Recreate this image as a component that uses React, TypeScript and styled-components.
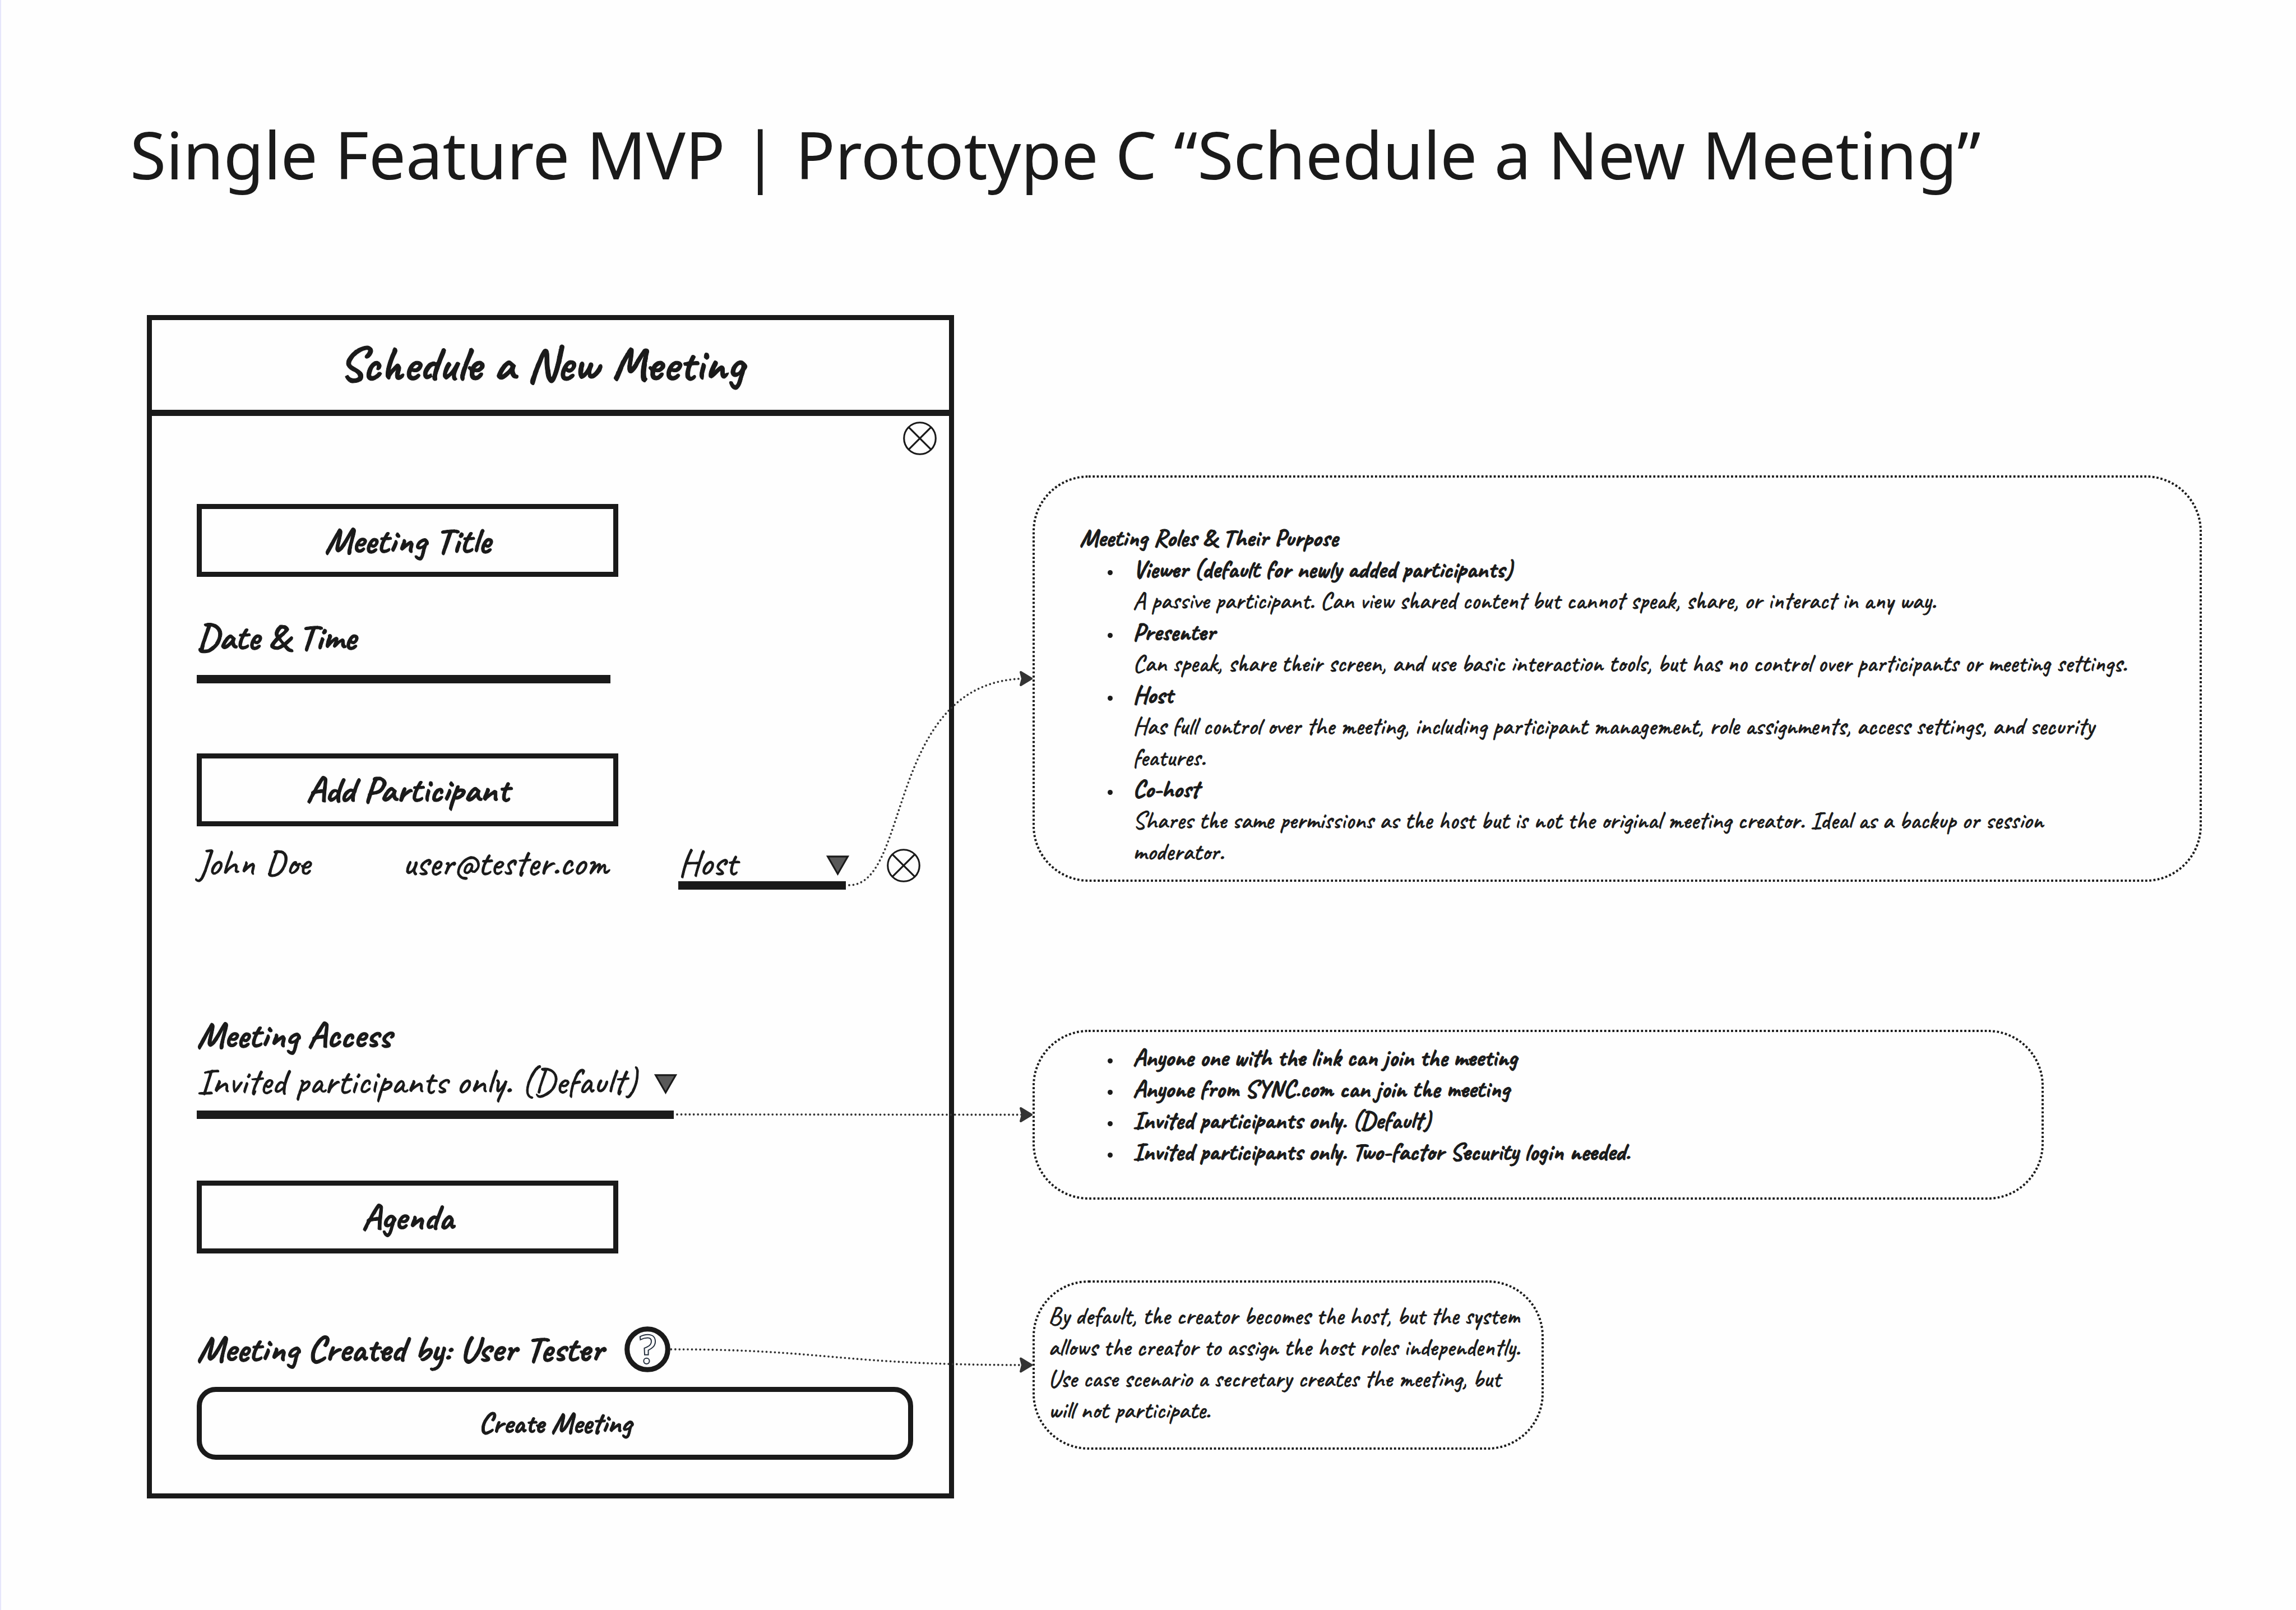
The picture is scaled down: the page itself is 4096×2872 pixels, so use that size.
import React, { RefObject, useLayoutEffect, useRef, useState } from "react";
import styled, { createGlobalStyle, css } from "styled-components";

const ink = "#1a1a1a";
const hand = '"Caveat", cursive';

const GlobalStyle = createGlobalStyle`
  *, *::before, *::after { box-sizing: border-box; }
  body { margin: 0; background: #fefefe; color: ${ink}; }
  h1, h2, p, ul { margin: 0; padding: 0; }
`;

const Page = styled.div`
  position: relative;
  min-height: 100vh;
  padding: 195px 168px 160px 230px;
  border-left: 2px solid #e6e6fb;
  font-family: ${hand};
`;

const PageTitle = styled.h1`
  font: 400 117px/160px "Noto Sans", sans-serif;
`;

const Board = styled.main`
  display: grid;
  grid-template-columns: minmax(0, 1440fr) minmax(0, 2086fr);
  gap: 140px;
  align-items: start;
  margin: 207px 0 0 30px;
  -webkit-text-stroke: 1px ${ink};
`;

/* Wireframe window */

const Window = styled.section`
  border: 9px solid ${ink};
`;

const WindowHeader = styled.header`
  padding: 0 32px 4px 0;
  border-bottom: 11px solid ${ink};
  text-align: center;
`;

const WindowTitle = styled.h2`
  font: 700 87px/156px ${hand};
`;

const WindowBar = styled.div`
  display: flex;
  justify-content: flex-end;
  padding: 10px 22px 0;
`;

const Form = styled.form`
  display: flex;
  flex-direction: column;
  align-items: flex-start;
  padding: 87px 64px 60px 80px;
`;

const bare = css`
  margin: 0;
  padding: 0;
  border: 0;
  border-radius: 0;
  background: transparent;
  color: ${ink};
  font-family: ${hand};
`;

const boxed = css`
  ${bare}
  width: 752px;
  height: 130px;
  border: 9px solid ${ink};
  font-size: 66px;
  font-weight: 700;
  line-height: 112px;
  text-align: center;
`;

const BoxInput = styled.input`
  ${boxed}
  &::placeholder { color: ${ink}; opacity: 1; }
`;

const BoxButton = styled.button`
  ${boxed}
`;

const SubmitButton = styled.button`
  ${boxed}
  width: 100%;
  margin-top: 26px;
  border-radius: 34px;
  font-size: 52px;
`;

const IconButton = styled.button`
  ${bare}
  display: flex;
  align-items: center;
  justify-content: center;
  svg { display: block; }
`;

const DateField = styled.div`
  display: flex;
  flex-direction: column;
  width: 738px;
  margin: 66px 0 125px;
`;

const FieldLabel = styled.label<{ $height: number }>`
  font-size: 66px;
  font-weight: 700;
  line-height: ${(p) => p.$height}px;
`;

const LineInput = styled.input`
  ${bare}
  height: 40px;
  border-bottom: 15px solid ${ink};
`;

const Participant = styled.div`
  display: flex;
  align-items: flex-start;
  margin-top: 34px;
  font-size: 66px;
  line-height: 64px;
`;

const Person = styled.div`
  display: flex;
  justify-content: space-between;
  width: 734px;
  margin-right: 125px;
`;

const RemoveButton = styled(IconButton)`
  height: 72px;
  margin-left: 73px;
`;

const SelectLine = styled.div<{ $width: number; $height: number }>`
  position: relative;
  width: ${(p) => p.$width}px;
  border-bottom: 15px solid ${ink};
  select {
    ${bare}
    display: block;
    appearance: none;
    width: 100%;
    height: ${(p) => p.$height}px;
    font-size: 66px;
    line-height: ${(p) => p.$height}px;
  }
  svg {
    position: absolute;
    top: calc(50% - 14px);
    right: -6px;
    pointer-events: none;
  }
`;

const AccessField = styled.div`
  display: flex;
  flex-direction: column;
  margin: 228px 0 110px;
`;

const CreatedBy = styled.div`
  display: flex;
  align-items: center;
  gap: 38px;
  margin-top: 130px;
  font-size: 66px;
  font-weight: 700;
  line-height: 78px;
`;

/* Notes */

const Notes = styled.aside`
  display: flex;
  flex-direction: column;
  align-items: flex-start;
  padding-top: 286px;
`;

const Note = styled.section<{ $pad: string; $max?: number; $gap?: number }>`
  position: relative;
  width: 100%;
  max-width: ${(p) => (p.$max ? `${p.$max}px` : "none")};
  margin-top: ${(p) => p.$gap ?? 0}px;
  padding: ${(p) => p.$pad};
  font-size: 44px;
  line-height: 56px;
`;

const Outline = styled.svg`
  position: absolute;
  top: 2px;
  left: 2px;
  width: calc(100% - 4px);
  height: calc(100% - 4px);
  overflow: visible;
  pointer-events: none;
`;

const NoteHeading = styled.h2`
  font: inherit;
  font-weight: 700;
`;

const NoteList = styled.ul`
  padding-left: 95px;
  list-style: none;
  li { position: relative; }
  li::before {
    content: "";
    position: absolute;
    top: 29px;
    left: -45px;
    width: 9px;
    height: 9px;
    border-radius: 50%;
    background: ${ink};
  }
`;

const Connectors = styled.svg`
  position: absolute;
  inset: 0;
  width: 100%;
  height: 100%;
  pointer-events: none;
`;

const CrossIcon = () => (
  <svg width="60" height="60" viewBox="407 23 210 210" fill="none" stroke={ink} strokeWidth="11" aria-hidden="true">
    <circle cx="512" cy="128" r="99" />
    <path d="M443 59l138 138M581 59L443 197" />
  </svg>
);

const CaretIcon = () => (
  <svg width="41" height="36" viewBox="24 64 145 126" aria-hidden="true">
    <path d="M33 70H160L96.500 180Z" fill="#595959" stroke={ink} strokeWidth="11" />
  </svg>
);

const HelpIcon = () => (
  <svg width="82" height="82" viewBox="27 36 289 289" fill="none" aria-hidden="true">
    <circle cx="171.500" cy="180.500" r="128" stroke={ink} strokeWidth="32" />
    <g stroke="#25303f" strokeWidth="7">
      <path d="M125 101C140 92 157 88 174 88C204 88 221 105 221 131C221 159 203 173 177 186V215H154L152 173C178 162 196 154 196 130C196 115 186 108 172 108C157 108 142 112 127 120Z" />
      <circle cx="166" cy="254" r="18" />
    </g>
  </svg>
);

const DottedOutline = () => (
  <Outline aria-hidden="true">
    <rect width="100%" height="100%" rx="98" fill="none" stroke={ink} strokeWidth="4" strokeDasharray="3.7 3.6" />
  </Outline>
);

type Line = { x1: number; y1: number; x2: number; y2: number; bend: [number, number] };

const roles = [
  ["Viewer (default for newly added participants)", "A passive participant. Can view shared content but cannot speak, share, or interact in any way."],
  ["Presenter", "Can speak, share their screen, and use basic interaction tools, but has no control over participants or meeting settings."],
  ["Host", "Has full control over the meeting, including participant management, role assignments, access settings, and security features."],
  ["Co-host", "Shares the same permissions as the host but is not the original meeting creator. Ideal as a backup or session moderator."],
];

const accessLevels = [
  "Anyone one with the link can join the meeting",
  "Anyone from SYNC.com can join the meeting",
  "Invited participants only. (Default)",
  "Invited participants only. Two-factor Security login needed.",
];

export default function App() {
  const page = useRef<HTMLDivElement>(null);
  const roleField = useRef<HTMLDivElement>(null);
  const accessField = useRef<HTMLDivElement>(null);
  const help = useRef<HTMLButtonElement>(null);
  const roleNote = useRef<HTMLElement>(null);
  const accessNote = useRef<HTMLElement>(null);
  const hostNote = useRef<HTMLElement>(null);
  const [lines, setLines] = useState<Line[]>([]);

  useLayoutEffect(() => {
    const measure = () => {
      const origin = page.current!.getBoundingClientRect();
      const link = (from: RefObject<HTMLElement | null>, to: RefObject<HTMLElement | null>, underline: boolean, bend: [number, number]): Line => {
        const a = from.current!.getBoundingClientRect();
        const b = to.current!.getBoundingClientRect();
        const left = origin.left + page.current!.clientLeft;
        return {
          x1: a.right - left + (underline ? 6 : 1),
          y1: (underline ? a.bottom - 8 : a.top + a.height / 2) - origin.top,
          x2: b.left - left,
          y2: b.top + b.height / 2 - origin.top,
          bend,
        };
      };
      setLines([
        link(roleField, roleNote, true, [0.34, 0.2]),
        link(accessField, accessNote, true, [0.5, 0.5]),
        link(help, hostNote, false, [0.43, 0.46]),
      ]);
    };
    measure();
    window.addEventListener("resize", measure);
    return () => window.removeEventListener("resize", measure);
  }, []);

  return (
    <Page ref={page}>
      <GlobalStyle />
      <PageTitle>Single Feature MVP | Prototype C “Schedule a New Meeting”</PageTitle>
      <Board>
        <Window>
          <WindowHeader>
            <WindowTitle>Schedule a New Meeting</WindowTitle>
          </WindowHeader>
          <WindowBar>
            <IconButton type="button" aria-label="Close"><CrossIcon /></IconButton>
          </WindowBar>
          <Form onSubmit={(e) => e.preventDefault()}>
            <BoxInput aria-label="Meeting Title" placeholder="Meeting Title" />
            <DateField>
              <FieldLabel $height={84} htmlFor="date">Date &amp; Time</FieldLabel>
              <LineInput id="date" />
            </DateField>
            <BoxButton type="button">Add Participant</BoxButton>
            <Participant>
              <Person>
                <span>John Doe</span>
                <span>user@tester.com</span>
              </Person>
              <SelectLine ref={roleField} $width={299} $height={64}>
                <select aria-label="Role" defaultValue="Host">
                  {["Viewer", "Presenter", "Host", "Co-host"].map((r) => <option key={r}>{r}</option>)}
                </select>
                <CaretIcon />
              </SelectLine>
              <RemoveButton type="button" aria-label="Remove John Doe"><CrossIcon /></RemoveButton>
            </Participant>
            <AccessField>
              <FieldLabel $height={64} htmlFor="access">Meeting Access</FieldLabel>
              <SelectLine ref={accessField} $width={851} $height={102}>
                <select id="access" defaultValue={accessLevels[2]}>
                  {accessLevels.map((a) => <option key={a}>{a}</option>)}
                </select>
                <CaretIcon />
              </SelectLine>
            </AccessField>
            <BoxInput aria-label="Agenda" placeholder="Agenda" />
            <CreatedBy>
              <span>Meeting Created by: User Tester</span>
              <IconButton ref={help} type="button" aria-label="About the meeting creator"><HelpIcon /></IconButton>
            </CreatedBy>
            <SubmitButton type="submit">Create Meeting</SubmitButton>
          </Form>
        </Window>
        <Notes>
          <Note ref={roleNote} $pad="84px 126px 25px 84px">
            <DottedOutline />
            <NoteHeading>Meeting Roles &amp; Their Purpose</NoteHeading>
            <NoteList>
              {roles.map(([name, text]) => (
                <li key={name}>
                  <strong>{name}</strong>
                  <p>{text}</p>
                </li>
              ))}
            </NoteList>
          </Note>
          <Note ref={accessNote} $pad="22px 84px 57px 84px" $max={1804} $gap={264}>
            <DottedOutline />
            <NoteList>
              {accessLevels.map((a) => <li key={a}><strong>{a}</strong></li>)}
            </NoteList>
          </Note>
          <Note ref={hostNote} $pad="36px 38px 42px 28px" $max={912} $gap={144}>
            <DottedOutline />
            <p>
              By default, the creator becomes the host, but the system allows the creator to assign the host roles
              independently. Use case scenario a secretary creates the meeting, but will not participate.
            </p>
          </Note>
        </Notes>
      </Board>
      <Connectors aria-hidden="true">
        {lines.map((l, i) => {
          const dx = l.x2 - l.x1;
          const c1 = l.x1 + dx * l.bend[0];
          const c2 = l.x1 + dx * l.bend[1];
          return (
            <g key={i}>
              <path
                d={`M${l.x1} ${l.y1}C${c1} ${l.y1} ${c2} ${l.y2} ${l.x2 - 10} ${l.y2}`}
                fill="none" stroke="#333" strokeWidth="3.8" strokeLinecap="round" strokeDasharray="0 7.4"
              />
              <path
                d="M-2 0L-21 -11.500L-18 0L-21 11.500Z" transform={`translate(${l.x2} ${l.y2})`}
                fill="#333" stroke="#333" strokeWidth="4" strokeLinejoin="round"
              />
            </g>
          );
        })}
      </Connectors>
    </Page>
  );
}
